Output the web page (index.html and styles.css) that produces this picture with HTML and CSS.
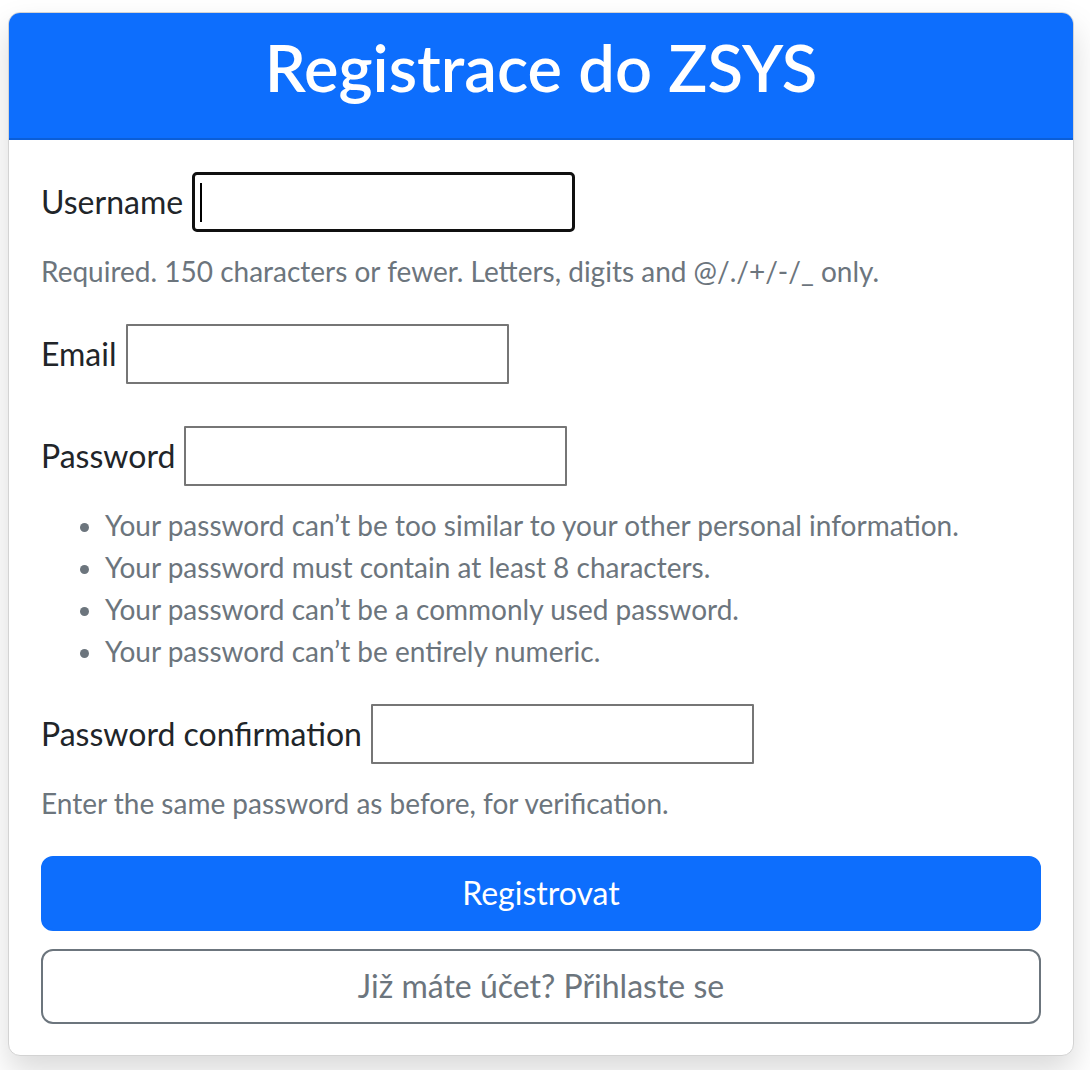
FILE: index.html
```
<!DOCTYPE html>
<html lang="cs">
<head>
<meta charset="utf-8">
<title>Registrace do ZSYS</title>
<link rel="stylesheet" href="styles.css">
</head>
<body>
<div class="page">
  <div class="card">
    <div class="card-header">
      <h2 class="title">Registrace do ZSYS</h2>
    </div>
    <div class="card-body">
      <form class="form">
        <div class="field">
          <div class="row">
            <label class="label" for="id_username">Username</label>
            <span class="input-wrap">
              <input class="input input-focused" type="text" id="id_username">
              <span class="caret"></span>
            </span>
          </div>
          <div class="help">Required. 150 characters or fewer. Letters, digits and @/./+/-/_ only.</div>
        </div>
        <div class="field field-nohelp">
          <div class="row">
            <label class="label" for="id_email">Email</label>
            <input class="input" type="email" id="id_email">
          </div>
        </div>
        <div class="field">
          <div class="row">
            <label class="label" for="id_password1">Password</label>
            <input class="input" type="password" id="id_password1">
          </div>
          <ul class="help-list">
            <li>Your password can’t be too similar to your other personal information.</li>
            <li>Your password must contain at least 8 characters.</li>
            <li>Your password can’t be a commonly used password.</li>
            <li>Your password can’t be entirely numeric.</li>
          </ul>
        </div>
        <div class="field">
          <div class="row">
            <label class="label" for="id_password2">Password confirmation</label>
            <input class="input" type="password" id="id_password2">
          </div>
          <div class="help">Enter the same password as before, for verification.</div>
        </div>
        <button type="button" class="btn btn-primary">Registrovat</button>
        <a class="btn btn-outline" href="#">Již máte účet? Přihlaste se</a>
      </form>
    </div>
  </div>
</div>
</body>
</html>
```
FILE: styles.css
```
* {
  box-sizing: border-box;
}

html, body {
  margin: 0;
  padding: 0;
  background: #ffffff;
}

body {
  font-family: "Lato", "Open Sans", sans-serif;
  color: #212529;
  font-size: 32px;
  line-height: 1.5;
}

.page {
  padding: 12px 16px 14px 8px;
}

.card {
  width: 1066px;
  background: #ffffff;
  border: 1px solid #d3d3d3;
  border-radius: 12px;
  box-shadow: 0 16px 32px rgba(0, 0, 0, 0.15);
}

.card-header {
  background: #0d6efd;
  border-bottom: 2px solid #0b5ed7;
  border-radius: 11px 11px 0 0;
  padding: 16px 32px;
  text-align: center;
}

.title {
  margin: 0 0 16px;
  font-size: 65px;
  font-weight: 600;
  line-height: 76.8px;
  color: #ffffff;
}

.card-body {
  padding: 32px 32px 31px;
}

.form {
  display: flex;
  flex-direction: column;
}

.field {
  margin-bottom: 32px;
}

.field-nohelp {
  margin-bottom: 42px;
}

.row {
  display: flex;
  align-items: center;
  gap: 9px;
  height: 60px;
}

.label {
  font-size: 32px;
  line-height: 48px;
  color: #212529;
}

.input {
  width: 383px;
  height: 60px;
  margin: 0;
  padding: 2px 4px;
  border: 2px solid #767676;
  border-radius: 1px;
  background: #ffffff;
  font: inherit;
  outline: none;
}

.input-wrap {
  position: relative;
  display: block;
  width: 383px;
  height: 60px;
}

.input-focused {
  border: 3px solid #101010;
  border-radius: 5px;
}

.caret {
  position: absolute;
  left: 8px;
  top: 11px;
  width: 2px;
  height: 39px;
  background: #000000;
}

.help {
  margin-top: 18px;
  font-size: 28px;
  line-height: 42px;
  color: #6c757d;
}

.help-list {
  margin: 18px 0 0;
  padding-left: 64px;
  font-size: 28px;
  line-height: 42px;
  color: #6c757d;
}

.btn {
  display: flex;
  align-items: center;
  justify-content: center;
  width: 100%;
  height: 75px;
  border-radius: 12px;
  font-family: inherit;
  font-size: 32px;
  line-height: 48px;
  text-decoration: none;
  cursor: pointer;
}

.btn-primary {
  background: #0d6efd;
  border: 2px solid #0d6efd;
  color: #ffffff;
}

.btn-outline {
  margin-top: 18px;
  background: #ffffff;
  border: 2px solid #6c757d;
  color: #6c757d;
}
```
